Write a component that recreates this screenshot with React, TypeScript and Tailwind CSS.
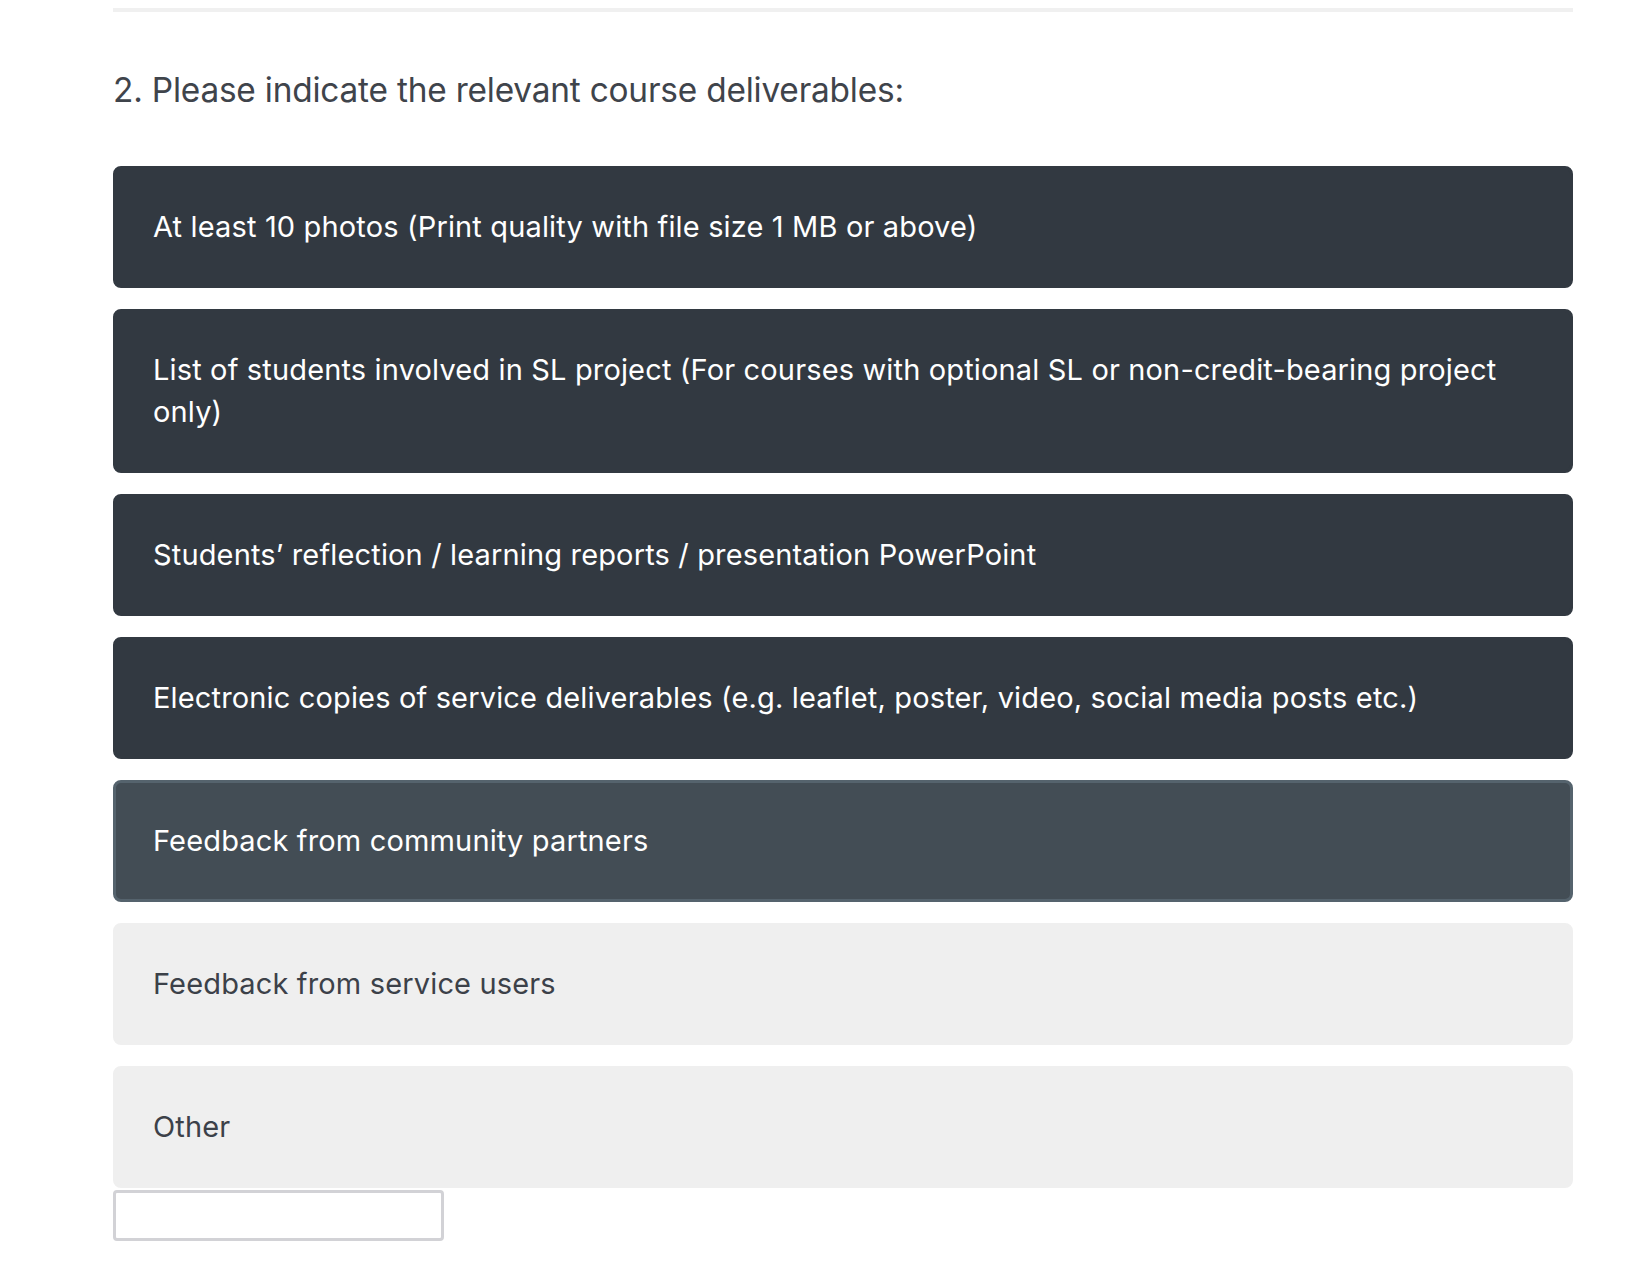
import React from 'react';

const options = [
  { label: 'At least 10 photos (Print quality with file size 1 MB or above)', state: 'on' },
  {
    label:
      'List of students involved in SL project (For courses with optional SL or non-credit-bearing project only)',
    state: 'on',
  },
  { label: 'Students’ reflection / learning reports / presentation PowerPoint', state: 'on' },
  {
    label: 'Electronic copies of service deliverables (e.g. leaflet, poster, video, social media posts etc.)',
    state: 'on',
  },
  { label: 'Feedback from community partners', state: 'hover' },
  { label: 'Feedback from service users', state: 'off' },
  { label: 'Other', state: 'off' },
];

export default function App() {
  return (
    <div className="min-h-[1280px] bg-white font-['Inter',sans-serif]">
      <div className="ml-[113px] w-[1460px] pt-[8px]">
        <div className="h-[4px] bg-[#f0f0f0]" />

        <h2 className="mt-[58px] text-[33.4px] leading-[40px] text-[#3f444b] tracking-[-0.2px]">
          2. Please indicate the relevant course deliverables:
        </h2>

        <div className="mt-[56px] flex flex-col gap-[21px]">
          {options.map((opt, i) => {
            const isLast = i === options.length - 1;
            let cls = 'bg-[#323941] text-white border-[3px] border-[#323941]';
            if (opt.state === 'hover') cls = 'bg-[#434d55] text-white border-[3px] border-[#55636d]';
            if (opt.state === 'off') cls = 'bg-[#efefef] text-[#3c4149] border-[3px] border-[#efefef]';
            return (
              <div key={opt.label}>
                <div
                  className={`rounded-[8px] px-[37px] py-[37px] text-[29px] leading-[42px] tracking-[0.15px] ${cls}`}
                >
                  {opt.label}
                </div>
                {isLast && (
                  <input
                    type="text"
                    className="mt-[2px] block h-[51px] w-[331px] rounded-[4px] border-[3px] border-[#d2d2d6] bg-white outline-none"
                  />
                )}
              </div>
            );
          })}
        </div>
      </div>
    </div>
  );
}
